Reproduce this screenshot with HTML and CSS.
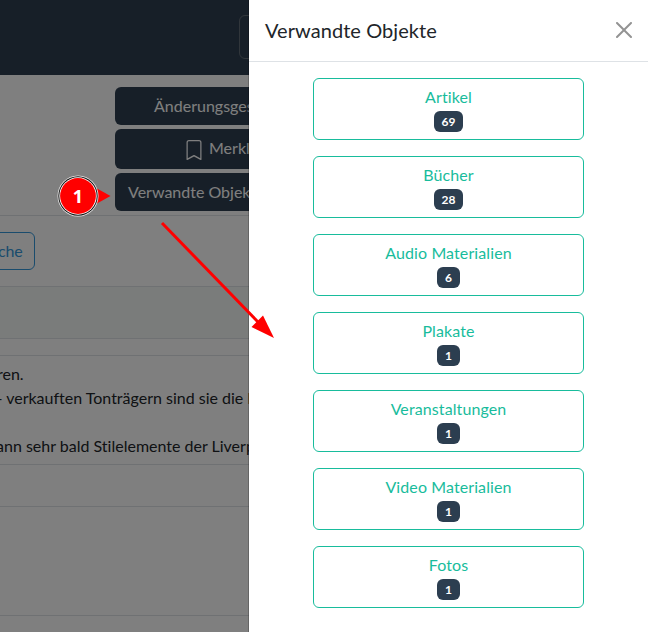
FILE: index.html
```html
<!DOCTYPE html>
<html lang="de">
<head>
<meta charset="utf-8">
<title>Verwandte Objekte</title>
<link rel="stylesheet" href="styles.css">
</head>
<body>
<main class="page">
  <nav class="navbar"><div class="nav-toggle"></div></nav>
  <section class="actions">
    <button class="btn btn-history">Änderungsgeschichte</button>
    <button class="btn btn-mark"><svg width="20" height="20" viewBox="0 0 16 16" fill="currentColor"><path d="M2 2a2 2 0 0 1 2-2h8a2 2 0 0 1 2 2v13.500a.5.5 0 0 1-.777.416L8 13.101l-5.223 2.815A.5.5 0 0 1 2 15.500zm2-1a1 1 0 0 0-1 1v12.566l4.723-2.482a.5.5 0 0 1 .554 0L13 14.566V2a1 1 0 0 0-1-1z"/></svg><span>Merkliste</span></button>
    <button class="btn btn-related">Verwandte Objekte</button>
  </section>
  <section class="search"><button class="btn-search">che</button></section>
  <div class="band"></div>
  <div class="gap"></div>
  <section class="copy">
    <p>ren.</p>
    <p class="sales">- verkauften Tonträgern sind sie die bis</p>
    <p>&nbsp;</p>
    <p class="style">ann sehr bald Stilelemente der Liverpooler</p>
  </section>
  <div class="row-short"></div>
  <div class="row-tall"></div>
</main>
<div class="backdrop"></div>
<aside class="panel">
  <header class="panel-header">
    <h5>Verwandte Objekte</h5>
    <svg class="close" width="16" height="16" viewBox="0 0 16 16"><path d="M.293.293a1 1 0 0 1 1.414 0L8 6.586 14.293.293a1 1 0 1 1 1.414 1.414L9.414 8l6.293 6.293a1 1 0 0 1-1.414 1.414L8 9.414l-6.293 6.293a1 1 0 0 1-1.414-1.414L6.586 8 .293 1.707a1 1 0 0 1 0-1.414z"/></svg>
  </header>
  <div class="panel-body">
    <a class="item">Artikel<span class="badge">69</span></a>
    <a class="item">Bücher<span class="badge">28</span></a>
    <a class="item">Audio Materialien<span class="badge">6</span></a>
    <a class="item">Plakate<span class="badge">1</span></a>
    <a class="item">Veranstaltungen<span class="badge">1</span></a>
    <a class="item">Video Materialien<span class="badge">1</span></a>
    <a class="item">Fotos<span class="badge">1</span></a>
  </div>
</aside>
<svg class="annotations" width="648" height="632" viewBox="0 0 648 632">
  <path d="M97 188.500L110.500 196 97 203.500z" fill="red"/>
  <circle cx="78" cy="196" r="20.500" fill="#eee"/>
  <circle cx="78" cy="196" r="19.700" fill="#111"/>
  <circle cx="78" cy="196" r="18.700" fill="#fff"/>
  <circle cx="78" cy="196" r="17.900" fill="red"/>
  <text x="78" y="203" text-anchor="middle">1</text>
  <path d="M162 223L258 322" stroke="red" stroke-width="3"/>
  <path d="M274 338L251.500 327 263 315.500z" fill="red"/>
</svg>
</body>
</html>
```
FILE: styles.css
```css
* { box-sizing: border-box; }
body {
  margin: 0;
  height: 632px;
  overflow: hidden;
  font: 16px/24px Lato, "Liberation Sans", sans-serif;
  font-variant-ligatures: none;
  color: #212529;
  background: #fff;
}
.page { height: 632px; overflow: hidden; }
.navbar { height: 75px; padding: 15px 0 0 239px; background: #2f3f50; }
.nav-toggle { width: 56px; height: 44px; border: 1px solid #626c76; border-radius: 6px; }
.actions {
  display: flex;
  flex-direction: column;
  align-items: flex-start;
  gap: 4px;
  height: 141px;
  padding: 12px 0 0 115px;
  border-bottom: 1px solid #dee2e6;
}
.btn {
  display: flex;
  align-items: center;
  width: 220px;
  height: 38px;
  padding: 0 0 0 13px;
  border: 0;
  border-radius: 6px;
  font: inherit;
  font-variant-ligatures: none;
  white-space: nowrap;
  color: #fff;
  background: #2f3f50;
}
.btn-history { padding-left: 39px; }
.btn-mark { height: 40px; padding-left: 69px; gap: 5px; }
.btn-mark svg { margin-top: 2px; }
.btn-mark span { margin-bottom: 2px; }
.search { height: 71px; padding-top: 16px; border-bottom: 1px solid #dee2e6; }
.btn-search {
  display: block;
  width: 48px;
  height: 38px;
  margin-left: -13px;
  padding: 0 12px;
  border: 1px solid #3498db;
  border-radius: 6px;
  font: inherit;
  text-align: right;
  padding-right: 12px;
  letter-spacing: -.1px;
  text-indent: -2px;
  padding-right: 13px;
  color: #3498db;
  background: transparent;
}
.band { height: 52px; background: #f5f8f7; border-bottom: 1px solid #dee2e6; }
.gap { height: 17px; border-bottom: 1px solid #dee2e6; }
.copy { height: 109px; padding-top: 6px; border-bottom: 1px solid #dee2e6; white-space: nowrap; }
.copy p { margin: 0 0 0 -3px; }
.copy .sales { margin-left: -3.500px; }
.copy .style { margin-left: -4px; }
.row-short { height: 42px; border-bottom: 1px solid #dee2e6; }
.row-tall { height: 109px; border-bottom: 1px solid #dee2e6; }
.backdrop { position: absolute; inset: 0; background: rgba(0, 0, 0, .5); }
.panel {
  position: absolute;
  top: 0;
  right: 0;
  width: 400px;
  height: 632px;
  background: #fff;
  background-clip: padding-box;
  border-left: 1px solid rgba(0, 0, 0, .2);
}
.panel-header {
  display: flex;
  align-items: center;
  justify-content: space-between;
  height: 62px;
  padding: 0 16px 1px;
  border-bottom: 1px solid #dee2e6;
}
.panel-header h5 { margin: 0; font-size: 20px; font-weight: 400; line-height: 30px; letter-spacing: .06px; }
.close { opacity: .42; }
.panel-body { display: flex; flex-direction: column; gap: 16px; padding: 16px 64px; }
.item {
  display: flex;
  flex-direction: column;
  align-items: center;
  height: 62px;
  padding-top: 6px;
  border: 1px solid #18bc9c;
  border-radius: 6px;
  letter-spacing: .1px;
  color: #18bc9c;
}
.badge {
  height: 21px;
  margin-top: 2px;
  padding: 4.500px 7.800px;
  border-radius: 6px;
  font-size: 12px;
  font-weight: 700;
  line-height: 12px;
  letter-spacing: 0;
  color: #fff;
  background: #2c3e50;
}
.annotations { position: absolute; inset: 0; }
.annotations text { font: 700 18px "Open Sans", sans-serif; fill: #fff; }
```
